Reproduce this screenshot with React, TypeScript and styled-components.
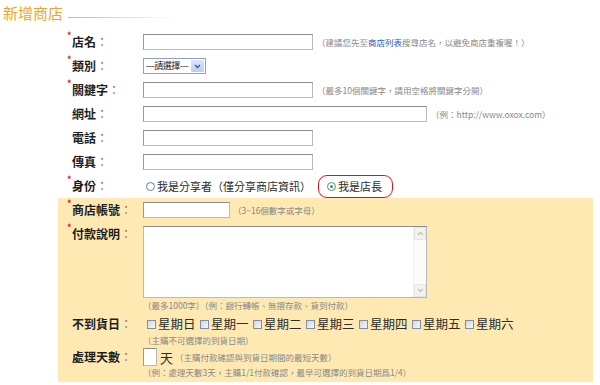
import React from 'react';
import styled, { createGlobalStyle } from 'styled-components';

const GlobalStyle = createGlobalStyle`
	html, body {
		margin: 0;
		padding: 0;
		background: #fff;
	}
	body {
		font-family: 'Noto Sans CJK TC', 'Liberation Sans', sans-serif;
		color: #222;
	}
`;

const Page = styled.div`
	width: 600px;
	height: 385px;
	overflow: hidden;
`;

const Header = styled.div`
	display: flex;
	align-items: flex-end;
	gap: 5px;
	height: 22px;
	padding-left: 3px;
`;

const Title = styled.h1`
	margin: 0;
	font-size: 15px;
	line-height: 18px;
	font-weight: 400;
	color: #f4a326;
`;

const TitleRule = styled.div`
	width: 107px;
	height: 1px;
	margin-bottom: 4px;
	background: linear-gradient(to right, #f5ab55, rgba(245, 171, 85, 0));
`;

const Form = styled.div`
	width: 535px;
	margin: 8px 0 0 58px;
`;

const Panel = styled.div`
	background: #fee9b3;
	padding-bottom: 4px;
`;

const Row = styled.div<{ $pt?: number }>`
	display: grid;
	grid-template-columns: 85px 1fr;
	align-items: start;
	padding-top: ${(p) => p.$pt ?? 0}px;
`;

const Label = styled.div<{ $lh: number }>`
	position: relative;
	padding-left: 14px;
	font-size: 12px;
	font-weight: 700;
	line-height: ${(p) => p.$lh}px;
	color: #1e1e1e;
	white-space: nowrap;
`;

const Star = styled.span<{ $top: number }>`
	position: absolute;
	left: 9px;
	top: ${(p) => p.$top}px;
	font-size: 9px;
	line-height: 10px;
	color: #e0141c;
`;

const Colon = styled.span`
	font-weight: 400;
	color: #777;
`;

const Field = styled.div`
	display: flex;
	flex-direction: column;
`;

const Line = styled.div<{ $h?: number; $pl?: number }>`
	display: flex;
	align-items: center;
	height: ${(p) => p.$h ?? 24}px;
	padding-left: ${(p) => p.$pl ?? 0}px;
`;

const TextInput = styled.input<{ $w: number; $h?: number }>`
	width: ${(p) => p.$w}px;
	height: ${(p) => p.$h ?? 16}px;
	box-sizing: border-box;
	margin: 0;
	padding: 0 2px;
	border: 1px solid #b9b9b9;
	border-top-color: #8c8c8c;
	border-left-color: #9a9a9a;
	background: #fff;
	font-size: 11px;
	outline: none;
`;

const Hint = styled.span<{ $ml?: number; $mt?: number; $lh?: number }>`
	margin-left: ${(p) => p.$ml ?? 0}px;
	margin-top: ${(p) => p.$mt ?? 0}px;
	font-size: 8.5px;
	line-height: ${(p) => p.$lh ?? 12}px;
	color: #888;
	white-space: nowrap;
`;

const Link = styled.a`
	color: #1c58c8;
	text-decoration: none;
`;

const Select = styled.div`
	display: flex;
	align-items: center;
	justify-content: space-between;
	width: 63px;
	height: 16px;
	box-sizing: border-box;
	padding: 1px 1px 1px 2px;
	border: 1px solid #8aa2c4;
	background: #fff;
	font-size: 9px;
	line-height: 12px;
	color: #111;
	letter-spacing: -0.4px;
	white-space: nowrap;
	overflow: hidden;
`;

const SelectArrow = styled.span`
	display: flex;
	flex: none;
	align-items: center;
	justify-content: center;
	width: 13px;
	height: 12px;
	background: linear-gradient(#dbe6fb, #bccdf3);
	border-radius: 1px;
`;

const RadioOption = styled.label`
	display: inline-flex;
	align-items: center;
	gap: 2px;
	font-size: 11px;
	color: #2a2a2a;
	white-space: nowrap;
`;

const Highlight = styled(RadioOption)`
	height: 23px;
	box-sizing: border-box;
	margin-left: 7px;
	padding: 0 10px 0 8px;
	border: 1px solid #d8141c;
	border-radius: 9px;
`;

const Radio = styled.span<{ $on?: boolean }>`
	display: inline-flex;
	align-items: center;
	justify-content: center;
	width: 9px;
	height: 9px;
	box-sizing: border-box;
	border: 1px solid #5f7fa8;
	border-radius: 50%;
	background: #fff;

	&::after {
		content: '';
		display: ${(p) => (p.$on ? 'block' : 'none')};
		width: 3px;
		height: 3px;
		border-radius: 50%;
		background: #1fae2c;
	}
`;

const TextAreaBox = styled.div`
	display: flex;
	width: 284px;
	height: 72px;
	box-sizing: border-box;
	border: 1px solid #b9b9b9;
	border-top-color: #8c8c8c;
	background: #fff;
`;

const TextArea = styled.textarea`
	flex: 1;
	border: none;
	resize: none;
	outline: none;
	background: transparent;
	overflow: hidden;
`;

const ScrollBar = styled.div`
	display: flex;
	flex-direction: column;
	justify-content: space-between;
	width: 12px;
	background: #fbfbf8;
	border-left: 1px solid #f0f0ea;
`;

const ScrollBtn = styled.span`
	display: flex;
	align-items: center;
	justify-content: center;
	height: 11px;
	background: #f2f2ee;
	border: 1px solid #e6e6e0;
`;

const CheckList = styled.div`
	display: flex;
	gap: 3px;
`;

const CheckOption = styled.label`
	display: inline-flex;
	align-items: center;
	gap: 2px;
	width: 50px;
	font-size: 12.5px;
	line-height: 14px;
	color: #2c2c2c;
	white-space: nowrap;
`;

const Check = styled.span`
	flex: none;
	width: 9px;
	height: 9px;
	box-sizing: border-box;
	border: 1px solid #7f8ea6;
	background: linear-gradient(135deg, #d6d6d6, #f7f7f7);
`;

const Unit = styled.span`
	margin-left: 3px;
	font-size: 13px;
	color: #2c2c2c;
`;

function Chevron({ up, color }: { up?: boolean; color: string }) {
	return (
		<svg width="7" height="5" viewBox="0 0 7 5">
			<path
				d={up ? 'M1 4 L3.5 1.5 L6 4' : 'M1 1 L3.5 3.5 L6 1'}
				fill="none"
				stroke={color}
				strokeWidth="1.3"
			/>
		</svg>
	);
}

function FieldLabel({ text, req, lh = 24 }: { text: string; req?: boolean; lh?: number }) {
	return (
		<Label $lh={lh}>
			{req && <Star $top={lh / 2 - 11}>*</Star>}
			{text}
			<Colon>：</Colon>
		</Label>
	);
}

const days = ['星期日', '星期一', '星期二', '星期三', '星期四', '星期五', '星期六'];

export default function App() {
	return (
		<Page>
			<GlobalStyle />
			<Header>
				<Title>新增商店</Title>
				<TitleRule />
			</Header>
			<Form>
				<Row>
					<FieldLabel text="店名" req />
					<Line>
						<TextInput $w={170} />
						<Hint $ml={4}>
							（建議您先至<Link href="#">商店列表</Link>搜尋店名，以避免商店重複喔！）
						</Hint>
					</Line>
				</Row>
				<Row>
					<FieldLabel text="類別" req />
					<Line>
						<Select>
							<span>---請選擇---</span>
							<SelectArrow>
								<Chevron color="#3c5684" />
							</SelectArrow>
						</Select>
					</Line>
				</Row>
				<Row>
					<FieldLabel text="關鍵字" req />
					<Line>
						<TextInput $w={170} />
						<Hint $ml={4}>（最多10個關鍵字，請用空格將關鍵字分開）</Hint>
					</Line>
				</Row>
				<Row>
					<FieldLabel text="網址" />
					<Line>
						<TextInput $w={284} />
						<Hint $ml={4}>（例：http://www.oxox.com）</Hint>
					</Line>
				</Row>
				<Row>
					<FieldLabel text="電話" />
					<Line>
						<TextInput $w={170} />
					</Line>
				</Row>
				<Row>
					<FieldLabel text="傳真" />
					<Line>
						<TextInput $w={170} />
					</Line>
				</Row>
				<Row>
					<FieldLabel text="身份" req />
					<Line $pl={3}>
						<RadioOption>
							<Radio />
							我是分享者（僅分享商店資訊）
						</RadioOption>
						<Highlight>
							<Radio $on />
							我是店長
						</Highlight>
					</Line>
				</Row>
				<Panel>
					<Row>
						<FieldLabel text="商店帳號" req />
						<Line>
							<TextInput $w={87} />
							<Hint $ml={3}>（3~16個數字或字母）</Hint>
						</Line>
					</Row>
					<Row $pt={4}>
						<FieldLabel text="付款說明" req lh={16} />
						<Field>
							<TextAreaBox>
								<TextArea />
								<ScrollBar>
									<ScrollBtn>
										<Chevron up color="#c4c4bc" />
									</ScrollBtn>
									<ScrollBtn>
										<Chevron color="#c4c4bc" />
									</ScrollBtn>
								</ScrollBar>
							</TextAreaBox>
							<Hint $lh={14}>（最多1000字）（例：銀行轉帳、無摺存款、貨到付款）</Hint>
						</Field>
					</Row>
					<Row $pt={5}>
						<FieldLabel text="不到貨日" lh={14} />
						<Field>
							<Line $h={14} $pl={4}>
								<CheckList>
									{days.map((d) => (
										<CheckOption key={d}>
											<Check />
											{d}
										</CheckOption>
									))}
								</CheckList>
							</Line>
							<Hint $mt={3}>（主購不可選擇的到貨日期）</Hint>
						</Field>
					</Row>
					<Row $pt={2}>
						<FieldLabel text="處理天數" lh={18} />
						<Field>
							<Line $h={18}>
								<TextInput $w={14} $h={18} />
								<Unit>天</Unit>
								<Hint $ml={2}>（主購付款確認與到貨日期間的最短天數）</Hint>
							</Line>
							<Hint>（例：處理天數3天，主購1/1付款確認，最早可選擇的到貨日期爲1/4）</Hint>
						</Field>
					</Row>
				</Panel>
			</Form>
		</Page>
	);
}
